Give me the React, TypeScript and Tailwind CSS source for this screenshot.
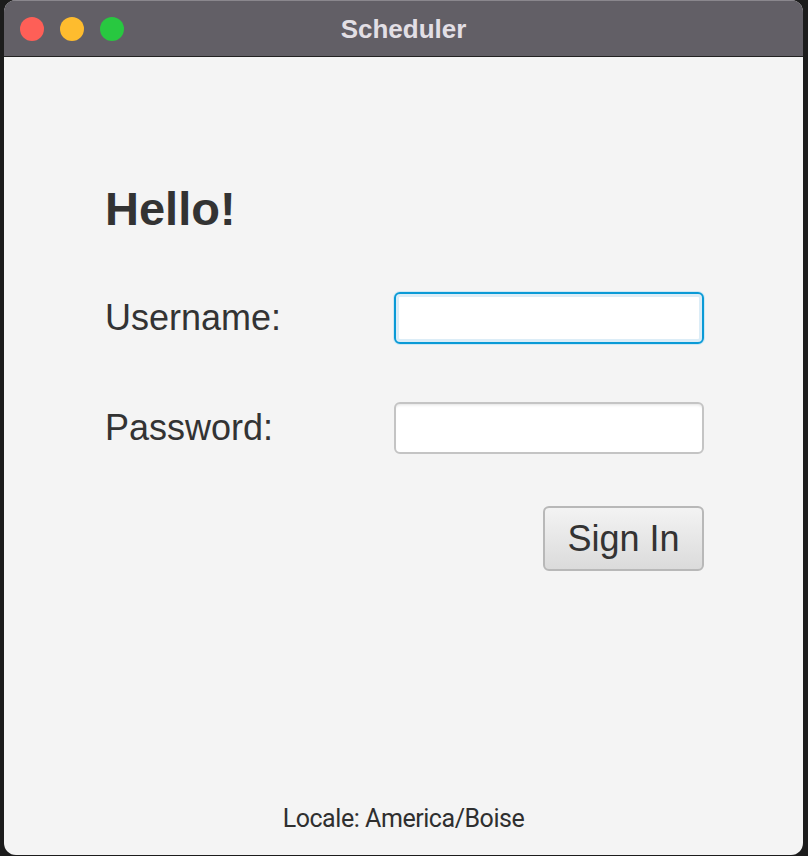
const TrafficLights = () => (
  <div className="flex items-center gap-4 pl-4">
    <span className="w-6 h-6 rounded-full bg-[#fe5f57]" />
    <span className="w-6 h-6 rounded-full bg-[#febc2e]" />
    <span className="w-6 h-6 rounded-full bg-[#28c840]" />
  </div>
);

export default function App() {
  return (
    <div className="w-[808px] h-[856px] bg-[#1c1c1c] pl-1 pr-[5px] pb-px font-['Liberation_Sans',Arial,sans-serif]">
      <div className="h-full flex flex-col rounded-[12px] overflow-hidden bg-[#f4f4f4]">
        {/* title bar */}
        <div className="h-[57px] shrink-0 grid grid-cols-[1fr_auto_1fr] items-center bg-[#625f66] border-b border-[#222] border-t border-t-[#8a878d]">
          <TrafficLights />
          <div className="text-[26px] leading-none font-bold text-[#e2dfe5]">Scheduler</div>
          <div />
        </div>

        {/* form */}
        <div className="flex-1 flex flex-col pl-[101px]">
          <h1 className="mt-[128px] text-[47px] leading-none font-bold text-[#333]">Hello!</h1>

          <div className="mt-[60px] grid grid-cols-[289px_310px] items-center gap-y-[58px] text-[36px] leading-none text-[#333]">
            <label>Username:</label>
            <input
              type="text"
              className="h-[52px] w-[310px] rounded-[6px] border-2 border-[#0a9ad6] bg-white outline-none shadow-[0_0_0_1px_#cfe8f4,inset_0_0_0_3px_#dcedf7]"
            />
            <label>Password:</label>
            <input
              type="password"
              className="h-[52px] w-[310px] rounded-[6px] border-2 border-[#c4c4c4] bg-white outline-none shadow-[inset_0_3px_3px_-2px_#e2e2e2]"
            />
          </div>

          <div className="mt-[52px] w-[599px] flex justify-end">
            <button className="w-[161px] h-[65px] rounded-[6px] border-2 border-[#b8b8b8] bg-gradient-to-b from-[#f3f3f3] to-[#dbdbdb] text-[36px] leading-none text-[#333]">
              Sign In
            </button>
          </div>

          <div className="mt-auto pb-[21px] pr-[101px] text-center font-['Roboto',sans-serif] text-[25px] leading-[30px] tracking-[-0.45px] text-[#2f2f2f]">
            Locale: America/Boise
          </div>
        </div>
      </div>
    </div>
  );
}
